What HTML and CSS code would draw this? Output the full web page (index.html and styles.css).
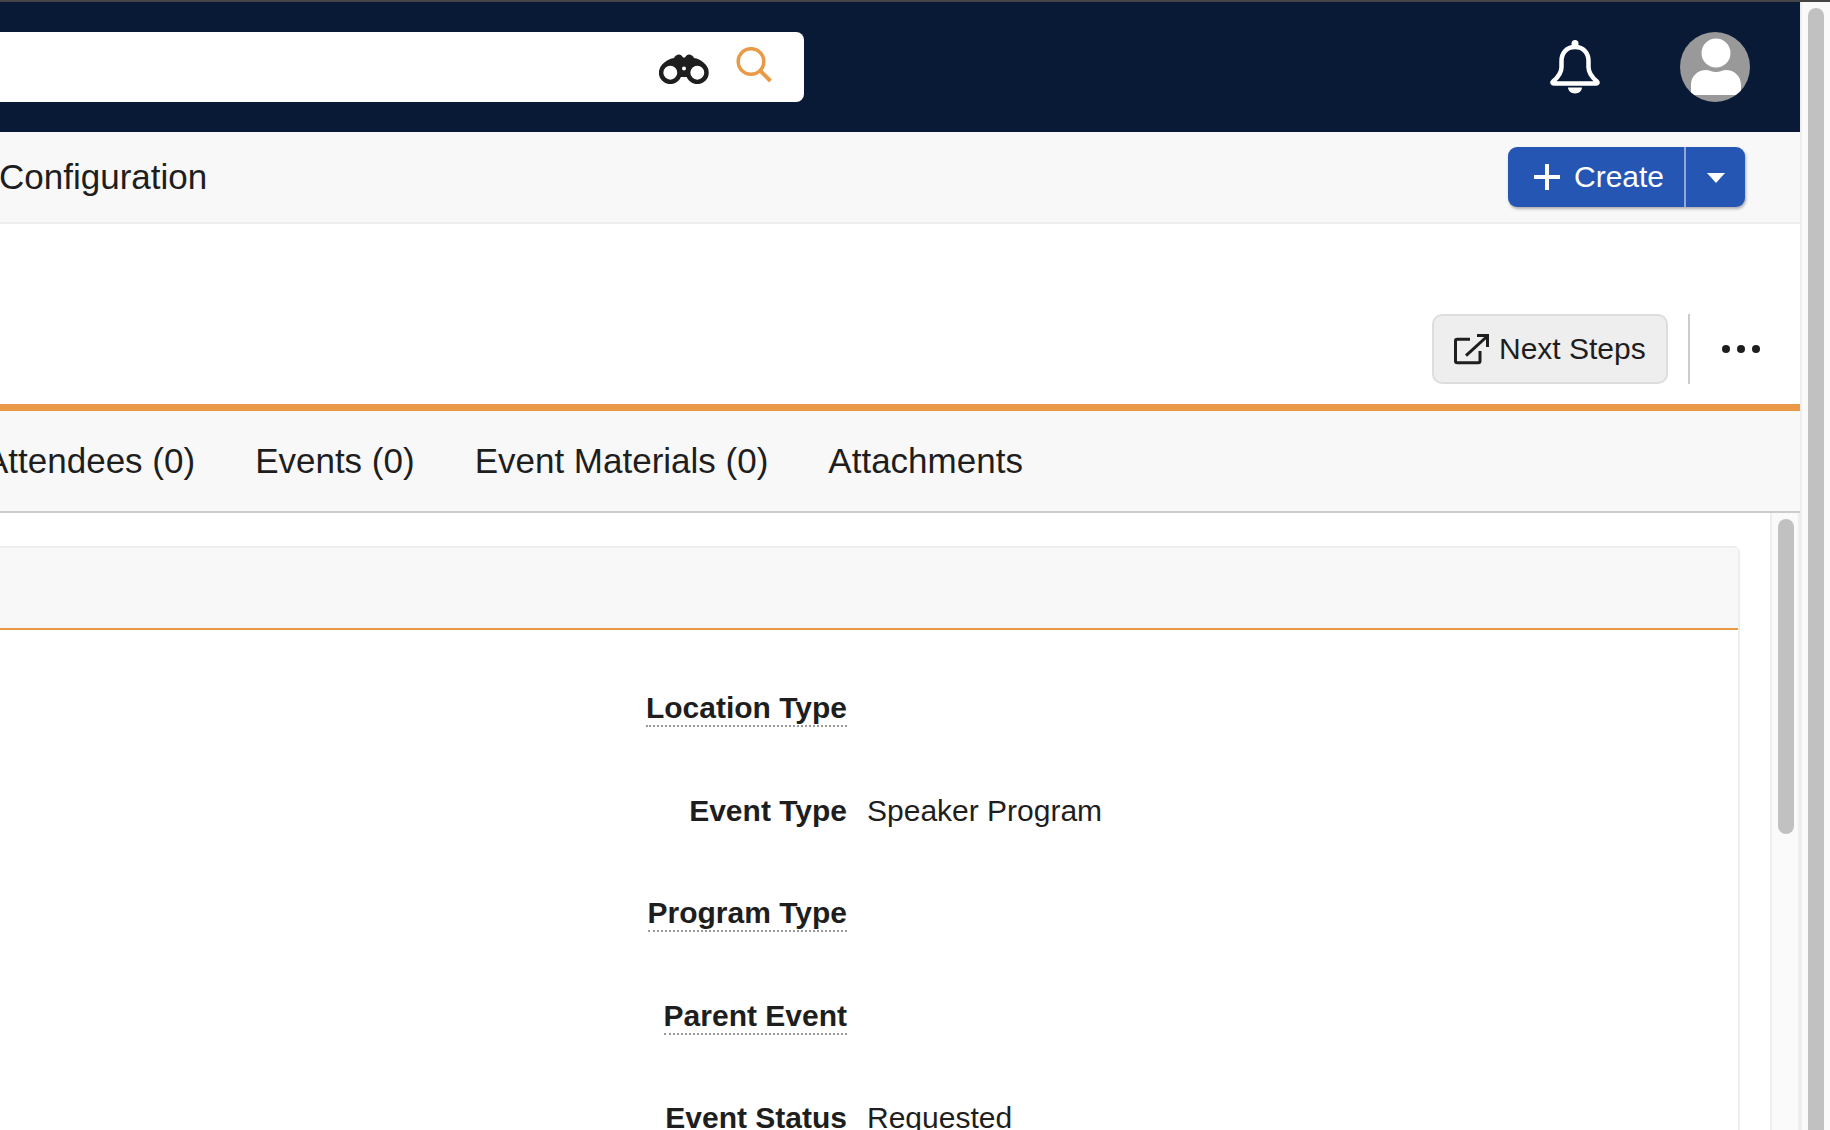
FILE: index.html
```html
<!DOCTYPE html>
<html lang="en">
<head>
    <meta charset="UTF-8">
    <meta name="viewport" content="width=device-width, initial-scale=1.0">
    <title>Event Configuration</title>
    <link rel="stylesheet" href="styles.css">
</head>
<body>
    <div class="top-strip"></div>
    <div class="shell">
        <div class="main">
            <div class="navbar">
                <div class="search-box">
                    <svg class="icon-binoculars" width="50" height="30" viewBox="0 0 50 30">
                        <path fill="#1e1e1e" d="M1 17C2 10 8 5 15 4c1-2 3-3.500 5-3.500 1.500 0 3 1 4 3h2c1-2 2.500-3 4-3 2 0 4 1.500 5 3.500 7 1 13 6 14 13l-14 2H15z"/>
                        <path stroke="#1e1e1e" stroke-width="4" d="M20 21h10"/>
                        <circle cx="11.300" cy="18.700" r="9.200" fill="#fff" stroke="#1e1e1e" stroke-width="4.500"/>
                        <circle cx="38.300" cy="18.700" r="9.200" fill="#fff" stroke="#1e1e1e" stroke-width="4.500"/>
                        <circle cx="25" cy="14.500" r="2" fill="#fff"/>
                    </svg>
                    <svg class="icon-search" width="36" height="36" viewBox="0 0 36 36" fill="none" stroke="#ea9a46" stroke-width="3.500">
                        <circle cx="15" cy="14.500" r="12.800"/>
                        <path stroke-width="4" d="M24.500 24l10 10"/>
                    </svg>
                </div>
                <svg class="icon-bell" width="50" height="56" viewBox="0 0 50 56">
                    <path fill="none" stroke="#fff" stroke-width="4.500" stroke-linejoin="round" d="M25 8c-9 0-13.500 6.500-13.500 14v6c0 5-3 10-8.500 14.500c-1 1-.500 2 .800 2h42.400c1.300 0 1.800-1 .800-2C41.500 38 38.500 33 38.500 28v-6C38.500 14.500 34 8 25 8z"/>
                    <circle cx="25" cy="4.500" r="3.500" fill="#fff"/>
                    <path fill="#fff" d="M18 48.500h14c0 3-3 6-7 6s-7-3-7-6z"/>
                </svg>
                <div class="avatar">
                    <svg width="70" height="70" viewBox="0 0 70 70">
                        <circle cx="36" cy="21" r="14.500" fill="#fff"/>
                        <path fill="#fff" d="M11 63V53c0-9 7-15 15-15c3 0 6 2 10 2s7-2 10-2c8 0 15 6 15 15v10z"/>
                    </svg>
                </div>
            </div>

            <div class="subbar">
                <div class="subbar-title">Configuration</div>
                <div class="create-btn">
                    <div class="create-main">
                        <svg width="28" height="28" viewBox="0 0 28 28"><path stroke="#fff" stroke-width="4" d="M14 1v26M1 14h26"/></svg>
                        <span>Create</span>
                    </div>
                    <div class="create-caret"></div>
                </div>
            </div>

            <div class="actions">
                <div class="btn-next">
                    <svg width="36" height="31" viewBox="0 0 36 31" fill="none" stroke="#1e1e1e" stroke-width="3">
                        <path d="M26 17v10c0 1-.800 1.800-1.800 1.800H3.300c-1 0-1.800-.800-1.800-1.800V7c0-1 .800-1.800 1.800-1.800H16"/>
                        <path d="M12 21.700L33.500 2"/>
                        <path d="M23 1.500h10.500V13"/>
                    </svg>
                    <span>Next Steps</span>
                </div>
                <div class="action-sep"></div>
                <div class="more-dots"><i></i><i></i><i></i></div>
            </div>

            <div class="tabs">
                <div class="tab">Attendees (0)</div>
                <div class="tab">Events (0)</div>
                <div class="tab">Event Materials (0)</div>
                <div class="tab">Attachments</div>
            </div>

            <div class="content">
                <div class="content-body">
                    <div class="panel">
                        <div class="panel-head"></div>
                        <div class="form">
                            <div class="form-row">
                                <div class="form-label"><span class="hint">Location Type</span></div>
                                <div class="form-value"></div>
                            </div>
                            <div class="form-row">
                                <div class="form-label"><span>Event Type</span></div>
                                <div class="form-value">Speaker Program</div>
                            </div>
                            <div class="form-row">
                                <div class="form-label"><span class="hint">Program Type</span></div>
                                <div class="form-value"></div>
                            </div>
                            <div class="form-row">
                                <div class="form-label"><span class="hint">Parent Event</span></div>
                                <div class="form-value"></div>
                            </div>
                            <div class="form-row">
                                <div class="form-label"><span>Event Status</span></div>
                                <div class="form-value">Requested</div>
                            </div>
                        </div>
                    </div>
                </div>
                <div class="inner-scroll"><div class="inner-thumb"></div></div>
            </div>
        </div>
        <div class="page-scroll"><div class="page-thumb"></div></div>
    </div>
</body>
</html>
```

FILE: styles.css
```css
:root {
    --navy: #091a36;
    --orange: #ea9a46;
    --blue: #2556b4;
    --panel-bg: #f8f8f8;
    --line: #eeeeee;
    --thumb: #c1c1c1;
    --track: #fafafa;
    --text-color: #1e1e1e;
}

html, body {
    margin: 0;
    padding: 0;
    height: 1130px;
    overflow: hidden;
}

body {
    font-family: "Liberation Sans", Arial, sans-serif;
    color: var(--text-color);
    background: #fff;
}

.top-strip {
    height: 2px;
    background: #444;
}

.shell {
    display: flex;
    height: 1128px;
}

.main {
    width: 1800px;
    flex: none;
    display: flex;
    flex-direction: column;
}

/* nav */
.navbar {
    height: 130px;
    flex: none;
    background: var(--navy);
    display: flex;
    align-items: flex-start;
    padding-top: 30px;
    box-sizing: border-box;
}

.search-box {
    width: 804px;
    height: 70px;
    background: #fff;
    border-radius: 0 8px 8px 0;
    display: flex;
    justify-content: flex-end;
    align-items: flex-start;
    box-sizing: border-box;
    padding-right: 32px;
}

.icon-binoculars {
    margin-top: 22px;
    margin-right: 27px;
}

.icon-search {
    margin-top: 15px;
}

.icon-bell {
    margin-left: 746px;
    margin-top: 7px;
}

.avatar {
    width: 70px;
    height: 70px;
    margin-left: 80px;
    border-radius: 50%;
    background: #999;
    overflow: hidden;
}

.avatar svg {
    display: block;
}

/* title bar */
.subbar {
    height: 92px;
    flex: none;
    box-sizing: border-box;
    background: var(--panel-bg);
    border-bottom: 2px solid var(--line);
    display: flex;
    justify-content: space-between;
    padding: 15px 55px 0 0;
}

.subbar-title {
    font-size: 35px;
    line-height: 60px;
    margin-left: -1px;
}

.create-btn {
    width: 237px;
    height: 60px;
    display: flex;
    background: var(--blue);
    border-radius: 9px;
    box-shadow: 1px 2px 3px rgba(0, 0, 0, 0.3);
    color: #fff;
}

.create-main {
    width: 178px;
    box-sizing: border-box;
    border-right: 2px solid #8fa8d8;
    display: flex;
    align-items: center;
    gap: 13px;
    padding-left: 25px;
    font-size: 30px;
}

.create-caret {
    width: 0;
    height: 0;
    margin: 26px 0 0 21px;
    border-left: 9px solid transparent;
    border-right: 9px solid transparent;
    border-top: 10px solid #fff;
}

/* action row */
.actions {
    height: 180px;
    flex: none;
    display: flex;
    justify-content: flex-end;
    align-items: flex-start;
    padding: 90px 40px 0 0;
    box-sizing: border-box;
}

.btn-next {
    width: 236px;
    height: 70px;
    box-sizing: border-box;
    background: #eee;
    border: 2px solid #ddd;
    border-radius: 10px;
    display: flex;
    align-items: center;
    gap: 9px;
    padding-left: 20px;
    font-size: 30px;
}

.action-sep {
    width: 2px;
    height: 70px;
    background: #ccc;
    margin-left: 20px;
}

.more-dots {
    display: flex;
    gap: 7px;
    height: 70px;
    align-items: center;
    margin-left: 32px;
}

.more-dots i {
    width: 8px;
    height: 8px;
    border-radius: 50%;
    background: var(--text-color);
}

/* tabs */
.tabs {
    height: 109px;
    flex: none;
    box-sizing: border-box;
    background: var(--panel-bg);
    border-top: 7px solid var(--orange);
    border-bottom: 2px solid #ccc;
    display: flex;
    align-items: center;
    gap: 60px;
    font-size: 35px;
    overflow: hidden;
}

.tab {
    white-space: nowrap;
}

.tab:first-child {
    margin-left: -15px;
}

/* content */
.content {
    flex: 1;
    display: flex;
    min-height: 0;
}

.content-body {
    flex: 1;
    padding: 33px 30px 0 0;
    overflow: hidden;
}

.panel {
    border-top: 2px solid var(--line);
    border-right: 2px solid var(--line);
    border-radius: 0 6px 0 0;
}

.panel-head {
    height: 80px;
    background: var(--panel-bg);
    border-bottom: 2px solid var(--orange);
}

.form {
    padding-top: 55px;
}

.form-row {
    display: grid;
    grid-template-columns: 847px 1fr;
    column-gap: 20px;
    height: 102.5px;
    font-size: 30px;
    line-height: 46px;
}

.form-label {
    text-align: right;
    font-weight: bold;
}

.form-label .hint {
    border-bottom: 2px dotted #999;
    display: inline-block;
    line-height: 35px;
}

.inner-scroll {
    width: 30px;
    flex: none;
    box-sizing: border-box;
    background: var(--track);
    border-left: 2px solid var(--line);
    border-right: 2px solid var(--line);
    padding: 6px 4px 0 6px;
}

.inner-thumb {
    height: 315px;
    background: var(--thumb);
    border-radius: 8px;
}

.page-scroll {
    flex: 1;
    box-sizing: border-box;
    background: var(--track);
    border-left: 2px solid var(--line);
    padding: 6px 6px 0 6px;
}

.page-thumb {
    height: 100%;
    background: var(--thumb);
    border-radius: 8px 8px 0 0;
}
```
